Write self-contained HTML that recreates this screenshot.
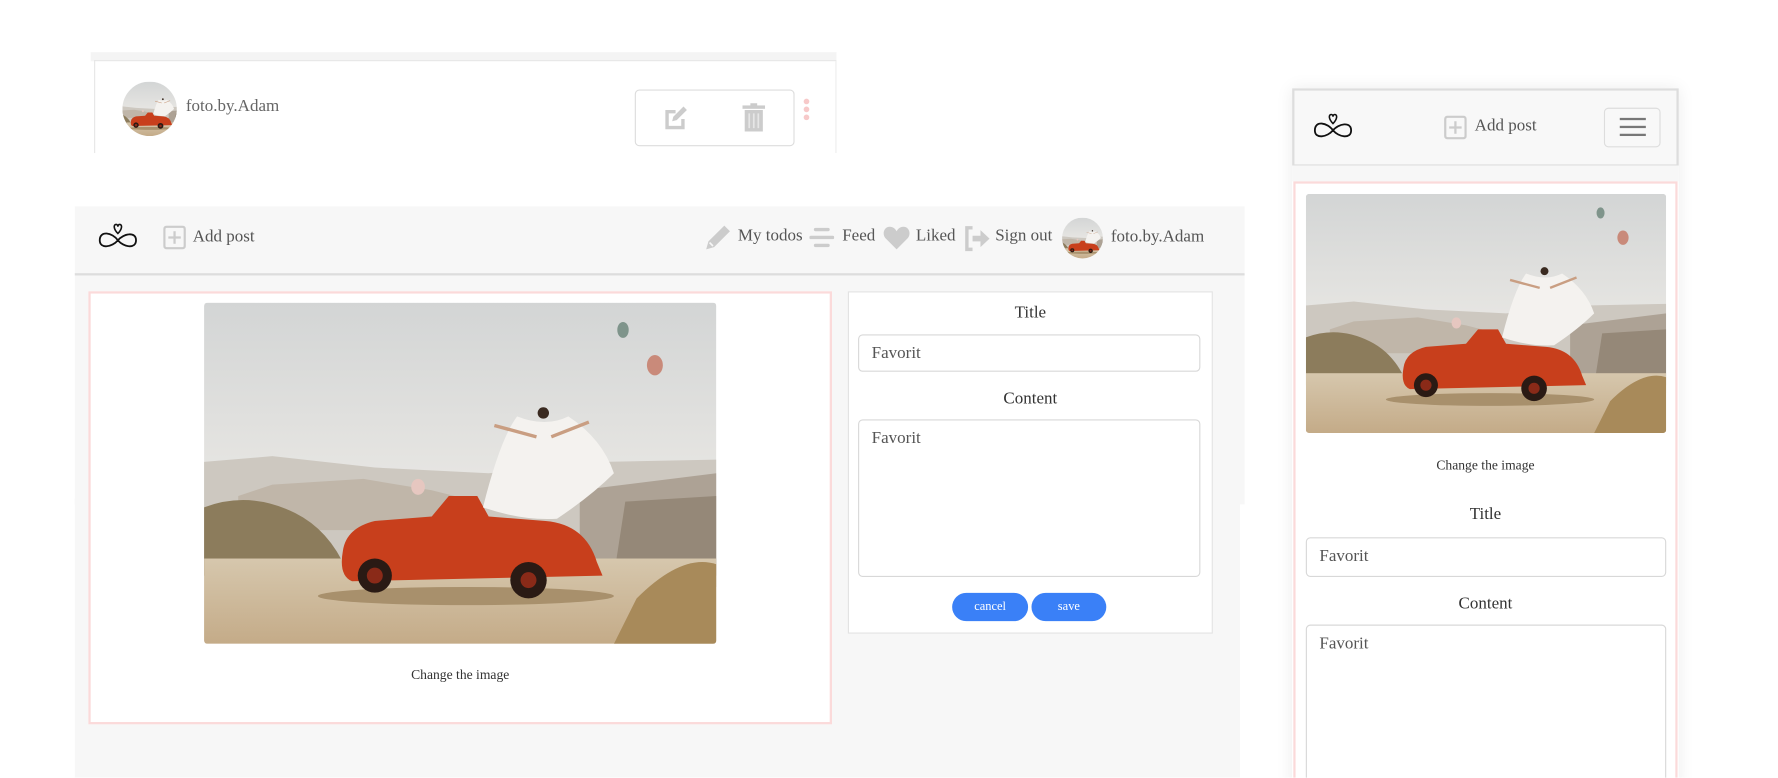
<!DOCTYPE html>
<html><head><meta charset="utf-8">
<style>
*{box-sizing:border-box;margin:0;padding:0}
html,body{width:1778px;height:778px;overflow:hidden;background:#fff}
body{font-family:"Liberation Serif",serif;color:#555}
#w{position:absolute;left:0;top:0;width:1570px;height:686px;overflow:hidden;transform:scale(1.1335);transform-origin:0 0}
.a{position:absolute}
.t{position:absolute;white-space:nowrap;line-height:1}
.ph{position:absolute;border-radius:3px;overflow:hidden}
.ph svg{width:100%;height:100%;display:block}
.av{position:absolute;border-radius:50%;overflow:hidden}
.av svg{width:100%;height:100%;display:block}
</style></head><body>
<svg width="0" height="0" style="position:absolute">
<defs>
<linearGradient id="sky" x1="0" y1="0" x2="0" y2="1"><stop offset="0" stop-color="#d3d5d5"/><stop offset=".5" stop-color="#e6e5e2"/><stop offset="1" stop-color="#ece7e0"/></linearGradient>
<linearGradient id="gr" x1="0" y1="0" x2="0" y2="1"><stop offset="0" stop-color="#d6c7ad"/><stop offset="1" stop-color="#c4ab88"/></linearGradient>
<symbol id="photo" viewBox="0 0 450 300" preserveAspectRatio="none">
<rect width="450" height="300" fill="url(#sky)"/>
<path d="M0 140 L60 135 L150 145 L250 150 L350 140 L450 138 L450 230 L0 230Z" fill="#cdc8c0"/>
<path d="M30 170 L60 160 L140 155 L200 165 L240 175 L200 200 L30 200Z" fill="#c0b6a9"/>
<path d="M330 165 L450 150 L450 250 L330 250Z" fill="#ada295"/>
<path d="M370 175 L450 170 L450 240 L360 240Z" fill="#958878"/>
<path d="M0 180 Q40 165 80 185 Q110 200 125 235 L0 240Z" fill="#8c7c5c"/>
<rect x="0" y="225" width="450" height="75" fill="url(#gr)"/>
<path d="M380 260 Q420 220 450 230 L450 300 L360 300Z" fill="#a88a5a"/>
<ellipse cx="230" cy="258" rx="130" ry="8" fill="#a8906c"/>
<path d="M122 218 Q125 198 150 192 L200 188 L215 170 L240 170 L250 188 L300 192 Q335 195 345 228 L350 240 L130 245 Q118 240 122 218Z" fill="#c83f1c"/>
<circle cx="150" cy="240" r="15" fill="#2a1a14"/><circle cx="150" cy="240" r="7" fill="#8a2a18"/>
<circle cx="285" cy="244" r="16" fill="#2a1a14"/><circle cx="285" cy="244" r="7" fill="#8a2a18"/>
<path d="M245 180 Q260 120 275 100 Q300 110 320 100 Q350 120 360 150 Q340 170 310 190 Q280 192 245 180Z" fill="#f4f2ef"/>
<circle cx="298" cy="97" r="5" fill="#3a2a20"/>
<path d="M255 108 L292 118 M305 118 L338 105" stroke="#c99e82" stroke-width="3"/>
<ellipse cx="368" cy="24" rx="5" ry="7" fill="#7f948b"/>
<ellipse cx="396" cy="55" rx="7" ry="9" fill="#c98a7a"/>
<ellipse cx="188" cy="162" rx="6" ry="7" fill="#e6c7c0"/>
</symbol>
</defs></svg>
<div id="w">
<div class="a" style="left:80px;top:46px;width:658px;height:8px;background:#f4f4f4"></div>
<div class="a" style="left:83px;top:53px;width:655px;height:82px;background:#fff;border-left:1px solid #e6e6e6;border-top:1px solid #e6e6e6;border-right:1px solid #eee"></div>
<div class="av" style="left:108px;top:72px;width:48px;height:48px"><svg viewBox="0 0 450 300" preserveAspectRatio="xMidYMid slice"><use href="#photo"/></svg></div>
<div class="t" style="left:164px;top:87px;font-size:15px;color:#666">foto.by.Adam</div>
<div class="a" style="left:560px;top:79px;width:141px;height:50px;background:#fff;border:1px solid #ddd;border-radius:4px"></div>
<svg class="a" style="left:584px;top:92px" width="24" height="24" viewBox="0 0 24 24"><path d="M3 5h9v3H6v11h11v-6h3v9H3Z" fill="#ccc"/><path d="M9 15l1-4 9-9 3 3-9 9Z" fill="#ccc"/></svg>
<svg class="a" style="left:655px;top:91px" width="20" height="25" viewBox="0 0 20 25"><rect x="0" y="2" width="20" height="3" fill="#ccc"/><rect x="7" y="0" width="6" height="3" fill="#ccc"/><path d="M2 6h16v19H2Z" fill="#ccc"/><path d="M6 9v13M10 9v13M14 9v13" stroke="#e6e6e6" stroke-width="1.5"/></svg>
<div class="a" style="left:709px;top:87px;width:5px;height:5px;border-radius:50%;background:#f7c9c9"></div>
<div class="a" style="left:709px;top:94px;width:5px;height:5px;border-radius:50%;background:#f7c9c9"></div>
<div class="a" style="left:709px;top:101px;width:5px;height:5px;border-radius:50%;background:#f7c9c9"></div>

<div class="a" style="left:66px;top:182px;width:1032px;height:263px;background:#f7f7f7"></div>
<div class="a" style="left:66px;top:440px;width:1028px;height:246px;background:#f7f7f7"></div>
<div class="a" style="left:66px;top:241px;width:1032px;height:2px;background:#ddd"></div>
<svg class="a" style="left:85px;top:196px" width="38" height="26" viewBox="0 0 38 26"><path d="M19 16 C14 9 3 7 3 16 C3 24 14 22 19 16 C24 10 35 8 35 16 C35 24 24 22 19 16Z" fill="none" stroke="#111" stroke-width="1.6"/><path d="M19 10 C15 6 15 2 17.5 2 C18.5 2 19 3 19 4 C19 3 19.5 2 20.5 2 C23 2 23 6 19 10Z" fill="none" stroke="#111" stroke-width="1.4"/></svg>
<svg class="a" style="left:144px;top:199px" width="20" height="21" viewBox="0 0 20 21"><rect x="1" y="1" width="18" height="19" rx="2" fill="none" stroke="#ccc" stroke-width="2"/><path d="M10 5v11M4.5 10.5h11" stroke="#ccc" stroke-width="2"/></svg>
<div class="t" style="left:170px;top:202px;font-size:15px">Add post</div>
<svg class="a" style="left:621px;top:197px" width="25" height="25" viewBox="0 0 25 25"><path d="M2 23 L4 16 L18 2 L23 7 L9 21Z" fill="#ccc"/><path d="M5 17 L8 20" stroke="#f7f7f7" stroke-width="1.5"/></svg>
<div class="t" style="left:651px;top:201px;font-size:15px">My todos</div>
<svg class="a" style="left:714px;top:200px" width="22" height="20" viewBox="0 0 22 20"><rect x="4" y="1" width="14" height="3" rx="1.5" fill="#ccc"/><rect x="0" y="8" width="22" height="3" rx="1.5" fill="#ccc"/><rect x="4" y="15" width="14" height="3" rx="1.5" fill="#ccc"/></svg>
<div class="t" style="left:743px;top:201px;font-size:15px">Feed</div>
<svg class="a" style="left:779px;top:199px" width="24" height="22" viewBox="0 0 24 22"><path d="M12 21 L2 11 C-1 7 1 1 6 1 C9 1 11 3 12 5 C13 3 15 1 18 1 C23 1 25 7 22 11Z" fill="#ccc"/></svg>
<div class="t" style="left:808px;top:201px;font-size:15px">Liked</div>
<svg class="a" style="left:850px;top:199px" width="24" height="23" viewBox="0 0 24 23"><path d="M8 2H3v19h5" fill="none" stroke="#ccc" stroke-width="3"/><path d="M8 9h7V4l8 7.5-8 7.5v-5H8Z" fill="#ccc"/></svg>
<div class="t" style="left:878px;top:201px;font-size:15px">Sign out</div>
<div class="av" style="left:937px;top:192px;width:36px;height:36px"><svg viewBox="0 0 450 300" preserveAspectRatio="xMidYMid slice"><use href="#photo"/></svg></div>
<div class="t" style="left:980px;top:202px;font-size:15px">foto.by.Adam</div>

<div class="a" style="left:78px;top:257px;width:656px;height:382px;background:#fff;border:2px solid #fbdada"></div>
<div class="ph" style="left:180px;top:267px;width:452px;height:301px"><svg><use href="#photo"/></svg></div>
<div class="t" style="left:0;width:812px;text-align:center;top:589px;font-size:12px;color:#333">Change the image</div>

<div class="a" style="left:748px;top:257px;width:322px;height:302px;background:#fff;border:1px solid #e3e3e3"></div>
<div class="t" style="left:748px;width:322px;text-align:center;top:269px;font-size:15px;color:#333">Title</div>
<div class="a" style="left:757px;top:295px;width:302px;height:33px;border:1px solid #d8d8d8;border-radius:4px;background:#fff"></div>
<div class="t" style="left:769px;top:305px;font-size:15px">Favorit</div>
<div class="t" style="left:748px;width:322px;text-align:center;top:345px;font-size:15px;color:#333">Content</div>
<div class="a" style="left:757px;top:370px;width:302px;height:139px;border:1px solid #d8d8d8;border-radius:4px;background:#fff"></div>
<div class="t" style="left:769px;top:380px;font-size:15px">Favorit</div>
<div class="a" style="left:840px;top:523px;width:67px;height:25px;border-radius:13px;background:#3a80f7;color:#fff;font-size:11px;text-align:center;line-height:25px">cancel</div>
<div class="a" style="left:910px;top:523px;width:66px;height:25px;border-radius:13px;background:#3a80f7;color:#fff;font-size:11px;text-align:center;line-height:25px">save</div>

<div class="a" style="left:1140px;top:78px;width:341px;height:620px;background:#fff;box-shadow:0 0 14px rgba(0,0,0,.08)"></div>
<div class="a" style="left:1140px;top:78px;width:341px;height:68px;background:#f8f8f8;border:2px solid #ddd;border-bottom:1px solid #ddd"></div>
<div class="a" style="left:1140px;top:146px;width:341px;height:14px;background:#f7f7f7"></div>
<svg class="a" style="left:1157px;top:99px" width="38" height="26" viewBox="0 0 38 26"><path d="M19 16 C14 9 3 7 3 16 C3 24 14 22 19 16 C24 10 35 8 35 16 C35 24 24 22 19 16Z" fill="none" stroke="#111" stroke-width="1.6"/><path d="M19 10 C15 6 15 2 17.5 2 C18.5 2 19 3 19 4 C19 3 19.5 2 20.5 2 C23 2 23 6 19 10Z" fill="none" stroke="#111" stroke-width="1.4"/></svg>
<svg class="a" style="left:1274px;top:102px" width="20" height="21" viewBox="0 0 20 21"><rect x="1" y="1" width="18" height="19" rx="2" fill="none" stroke="#ccc" stroke-width="2"/><path d="M10 5v11M4.5 10.5h11" stroke="#ccc" stroke-width="2"/></svg>
<div class="t" style="left:1301px;top:104px;font-size:15px">Add post</div>
<div class="a" style="left:1415px;top:95px;width:50px;height:35px;border:1px solid #ddd;border-radius:4px"></div>
<div class="a" style="left:1429px;top:104px;width:23px;height:2px;background:#777"></div>
<div class="a" style="left:1429px;top:111px;width:23px;height:2px;background:#777"></div>
<div class="a" style="left:1429px;top:118px;width:23px;height:2px;background:#777"></div>
<div class="a" style="left:1141px;top:160px;width:339px;height:540px;border:2px solid #fbdada;background:#fff"></div>
<div class="ph" style="left:1152px;top:171px;width:318px;height:211px"><svg><use href="#photo"/></svg></div>
<div class="t" style="left:1141px;width:339px;text-align:center;top:404px;font-size:12px;color:#333">Change the image</div>
<div class="t" style="left:1141px;width:339px;text-align:center;top:447px;font-size:15px;color:#333">Title</div>
<div class="a" style="left:1152px;top:474px;width:318px;height:35px;border:1px solid #d8d8d8;border-radius:4px"></div>
<div class="t" style="left:1164px;top:484px;font-size:15px">Favorit</div>
<div class="t" style="left:1141px;width:339px;text-align:center;top:526px;font-size:15px;color:#333">Content</div>
<div class="a" style="left:1152px;top:551px;width:318px;height:150px;border:1px solid #d8d8d8;border-radius:4px"></div>
<div class="t" style="left:1164px;top:561px;font-size:15px">Favorit</div>
</div>
</body></html>
